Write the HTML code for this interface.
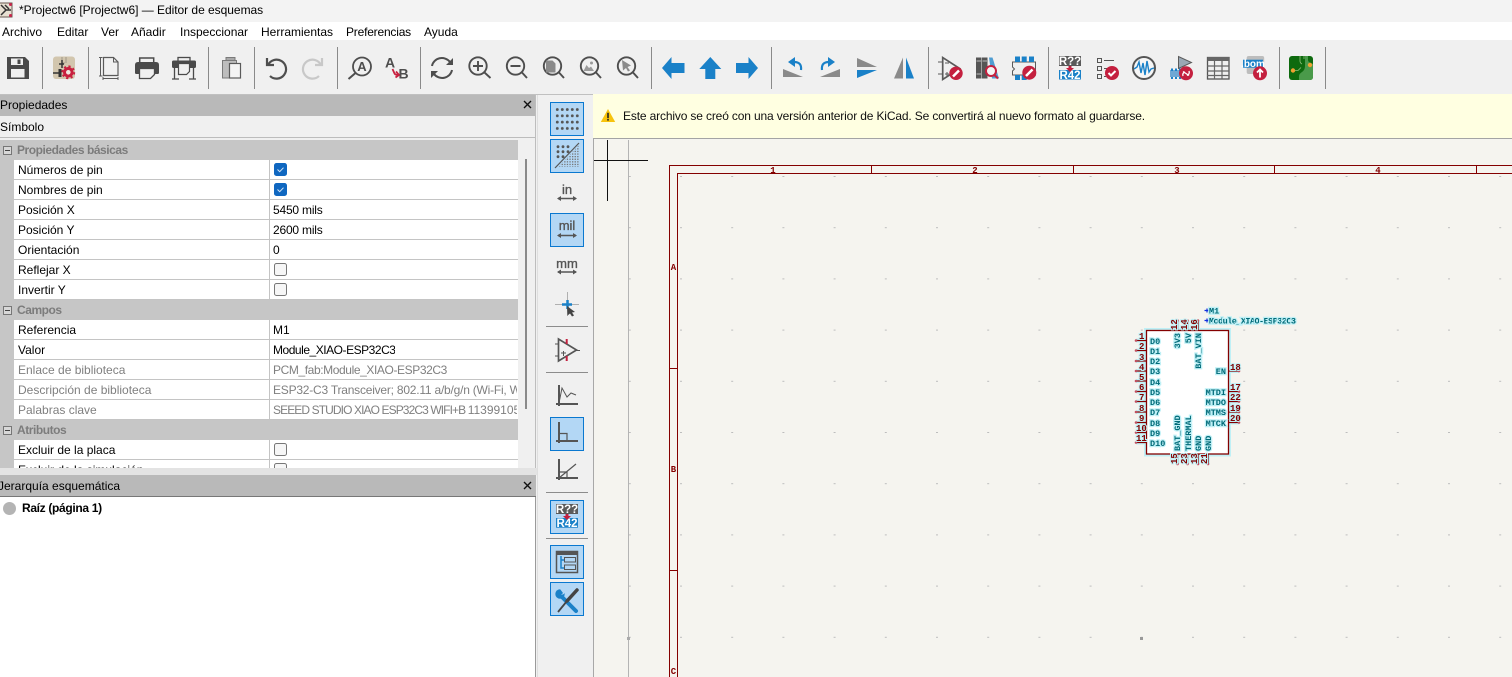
<!DOCTYPE html>
<html lang="es"><head><meta charset="utf-8"><title>Editor de esquemas</title>
<style>
html,body{margin:0;padding:0}
body{width:1512px;height:677px;overflow:hidden;position:relative;background:#f0f0f0;font:12px "Liberation Sans",sans-serif;color:#000}
.a{position:absolute}
.t{position:absolute;white-space:nowrap;line-height:20px;height:20px}
.m{top:22px;line-height:20px}
.row{position:absolute;left:14px;width:503.5px;height:19px;background:#fff;border-bottom:1px solid #c4c4c4}
.row span{position:absolute;top:1px;line-height:19px;white-space:nowrap}
.row .l{left:4px}.row .v{left:259px;max-width:244px;overflow:hidden;height:19px}
.row i{position:absolute;left:254.5px;top:0;width:1px;height:20px;background:#c4c4c4}
.row em{font-style:normal}
.g span{color:#7f7f7f}
.sec{position:absolute;left:0;width:517.5px;height:20px;background:#c6c6c6;font-weight:bold;color:#7c7c7c;line-height:20px;letter-spacing:-.45px}
.sec b{position:absolute;left:17px}
.sec u{position:absolute;left:3px;top:6px;width:7px;height:7px;border:1px solid #777;text-decoration:none;background:#d8d8d8}
.sec u:after{content:"";position:absolute;left:1px;top:3px;width:5px;height:1px;background:#444}
.cb{position:absolute;left:260px;top:3px;width:11px;height:11px;border:1px solid #777;border-radius:2.5px;background:#f6f6f6}
.on{background:#0f67c0;border-color:#0f67c0}
.on svg{position:absolute;left:1px;top:1px}
.tb{position:absolute;left:550px;width:32px;height:32px;background:#b3d7f5;border:1.5px solid #0a78d0}
</style></head><body>
<div class="a" style="left:0;top:0;width:1512px;height:22px;background:#f3f3f3"></div>
<div class="a" style="left:0;top:22px;width:1512px;height:18px;background:#fff"></div>
<div class="a" style="left:0;top:94px;width:593px;height:1px;background:#c0c0c0"></div>

<svg class="a" style="left:0;top:0" width="14" height="18" viewBox="0 0 14 18"><rect x="-3" y="3" width="15" height="14" fill="#e7e0d2" stroke="#6a5a50"/><path d="M1 5l5 5-5 5M6 10h5M5 5l4 4" fill="none" stroke="#333" stroke-width="1.5"/><circle cx="10.500" cy="4.500" r="1.500" fill="#c8264c"/><circle cx="10.500" cy="15.500" r="1.500" fill="#c8264c"/></svg>
<div class="t" style="left:19px;top:0;font-size:12px;letter-spacing:-.03px">*Projectw6 [Projectw6] — Editor de esquemas</div>
<div class="t m" style="left:2px">Archivo</div><div class="t m" style="left:57px">Editar</div><div class="t m" style="left:101px">Ver</div><div class="t m" style="left:131px">Añadir</div><div class="t m" style="left:180px">Inspeccionar</div><div class="t m" style="left:261px">Herramientas</div><div class="t m" style="left:346px;letter-spacing:-.2px">Preferencias</div><div class="t m" style="left:424px">Ayuda</div>

<!-- Properties panel -->
<div class="a" style="left:0;top:95px;width:536px;height:21px;background:#b9b9b9"></div>
<div class="t" style="left:0;top:95px;line-height:20px">Propiedades</div>
<div class="a" style="left:0;top:116px;width:536px;height:22px;background:#f0f0f0;border-bottom:1px solid #bcbcbc;box-sizing:border-box"></div>
<div class="t" style="left:0;top:117px">Símbolo</div>
<div class="a" style="left:0;top:139px;width:536px;height:330px;background:#f0f0f0"></div>
<div class="a" style="left:0;top:140px;width:14px;height:329px;background:#c6c6c6"></div>
<div class="a" style="left:525px;top:159px;width:2px;height:250px;background:#8a8a8a"></div>
<div class="a" style="left:535px;top:95px;width:1px;height:374px;background:#bdbdbd"></div>

<div class="sec" style="top:140px"><u></u><b>Propiedades básicas</b></div>
<div class="row" style="top:160px"><span class="l">Números de pin</span><i></i><div class="cb on"><svg width="9" height="9"><path d="M1.500 4.500l2.200 2.200 3.800-4" fill="none" stroke="#d8e8f8" stroke-width="1"/></svg></div></div>
<div class="row" style="top:180px"><span class="l">Nombres de pin</span><i></i><div class="cb on"><svg width="9" height="9"><path d="M1.500 4.500l2.200 2.200 3.800-4" fill="none" stroke="#d8e8f8" stroke-width="1"/></svg></div></div>
<div class="row" style="top:200px"><span class="l">Posición X</span><i></i><span class="v" style="letter-spacing:-.2px">5450 mils</span></div>
<div class="row" style="top:220px"><span class="l">Posición Y</span><i></i><span class="v" style="letter-spacing:-.2px">2600 mils</span></div>
<div class="row" style="top:240px"><span class="l">Orientación</span><i></i><span class="v">0</span></div>
<div class="row" style="top:260px"><span class="l">Reflejar X</span><i></i><div class="cb"></div></div>
<div class="row" style="top:280px"><span class="l">Invertir Y</span><i></i><div class="cb"></div></div>
<div class="sec" style="top:300px"><u></u><b>Campos</b></div>
<div class="row" style="top:320px"><span class="l">Referencia</span><i></i><span class="v">M1</span></div>
<div class="row" style="top:340px"><span class="l">Valor</span><i></i><span class="v" style="letter-spacing:-.47px">Module_XIAO-ESP32C3</span></div>
<div class="row g" style="top:360px"><span class="l">Enlace de biblioteca</span><i></i><span class="v" style="letter-spacing:-.4px">PCM_fab:Module_XIAO-ESP32C3</span></div>
<div class="row g" style="top:380px"><span class="l">Descripción de biblioteca</span><i></i><span class="v" style="letter-spacing:-.22px">ESP32-C3 Transceiver; 802.11 a/b/g/n (Wi-Fi, WiFi)</span></div>
<div class="row g" style="top:400px"><span class="l">Palabras clave</span><i></i><span class="v"><em style="letter-spacing:-.9px">SEEED STUDIO XIAO ESP32C3 WIFI+B </em>113991054</span></div>
<div class="sec" style="top:420px"><u></u><b>Atributos</b></div>
<div class="row" style="top:440px"><span class="l">Excluir de la placa</span><i></i><div class="cb"></div></div>
<div class="a" style="left:14px;top:460px;width:503.5px;height:8px;overflow:hidden;background:#fff"><div class="row" style="top:0;left:0"><span class="l">Excluir de la simulación</span><i></i><div class="cb"></div></div></div>
<div class="a" style="left:0;top:468px;width:537px;height:7px;background:#e3e3e3"></div>

<!-- Hierarchy -->
<div class="a" style="left:0;top:475px;width:536px;height:22px;background:#b9b9b9;border-bottom:1px solid #777;box-sizing:border-box"></div>
<div class="t" style="left:-2px;top:476px">Jerarquía esquemática</div>
<div class="a" style="left:0;top:497px;width:535px;height:180px;background:#fff;border-right:1px solid #9a9a9a"></div>
<div class="a" style="left:3px;top:502px;width:13px;height:13px;border-radius:50%;background:#b4b4b4"></div>
<div class="t" style="left:22px;top:498px;font-weight:bold;letter-spacing:-.33px">Raíz (página 1)</div>

<!-- Vertical toolbar -->
<div class="a" style="left:537px;top:95px;width:56px;height:582px;background:#f0f0f0;border-left:1px solid #dedede;box-sizing:border-box"></div>
<div class="tb" style="top:102px"></div><div class="tb" style="top:139px"></div><div class="tb" style="top:213px"></div><div class="tb" style="top:417px"></div><div class="tb" style="top:500px"></div><div class="tb" style="top:545px"></div><div class="tb" style="top:582px"></div>
<div class="a" style="left:546px;top:326px;width:42px;height:1px;background:#8c8c8c"></div>
<div class="a" style="left:546px;top:372px;width:42px;height:1px;background:#8c8c8c"></div>
<div class="a" style="left:546px;top:492px;width:42px;height:1px;background:#8c8c8c"></div>
<div class="a" style="left:546px;top:538px;width:42px;height:1px;background:#8c8c8c"></div>

<!-- Canvas -->
<svg class="a" style="left:593px;top:139px" width="919" height="538" viewBox="593 139 919 538" font-family="'Liberation Mono',monospace">
<defs><pattern id="g" x="628.800" y="124.800" width="51.200" height="51.200" patternUnits="userSpaceOnUse"><rect x="0" y="0" width="2" height="1" fill="#bdbdbd"/></pattern></defs>
<rect x="593" y="139" width="919" height="538" fill="#f5f4ef"/>
<rect x="628" y="140" width="884" height="537" fill="url(#g)"/>
<rect x="593" y="139" width="1" height="538" fill="#a8a8a8"/>
<rect x="628" y="140" width="1" height="537" fill="#b4b4b4"/>
<path d="M594 160.500H648M607.500 140V201" stroke="#111" fill="none"/>
<path d="M669.500 677V165.500H1512M677.500 677V173.500H1512M871.500 165V173M1073.500 165V173M1274.500 165V173M1476.500 165V173M669 368.500H677M669 570.500H677" fill="none" stroke="#840000" stroke-width="1"/>
<g fill="#840000" font-size="9" font-weight="bold" text-anchor="middle">
<text x="773" y="173">1</text><text x="975" y="173">2</text><text x="1177" y="173">3</text><text x="1378" y="173">4</text>
<text x="673.500" y="270">A</text><text x="673.500" y="472">B</text><text x="673.500" y="674">C</text></g>
<rect x="627" y="637" width="3" height="3" fill="#aaa"/><rect x="1140" y="637" width="3" height="3" fill="#999"/>

<!-- Symbol -->
<rect x="1146.500" y="330.500" width="82" height="123.500" fill="none" stroke="#bff0f6" stroke-width="5"/>
<path d="M1136 340.500h10M1136 350.500h10M1136 361h10M1136 371h10M1136 381h10M1136 391.500h10M1136 401.500h10M1136 412h10M1136 422.500h10M1136 432.500h10M1136 442.500h10M1229 371h10M1229 391.500h10M1229 401.500h10M1229 412h10M1229 422.500h10M1177.500 320.500v10M1187.500 320.500v10M1198 320.500v10M1177.500 454v10M1187.500 454v10M1198 454v10M1208 454v10" stroke="#bff0f6" stroke-width="4" fill="none"/>
<rect x="1147" y="331" width="81" height="123" fill="#fff"/>
<rect x="1146.500" y="330.500" width="82" height="123.500" fill="none" stroke="#840000" stroke-width="1.300"/>
<path d="M1136 340.500h10M1136 350.500h10M1136 361h10M1136 371h10M1136 381h10M1136 391.500h10M1136 401.500h10M1136 412h10M1136 422.500h10M1136 432.500h10M1136 442.500h10M1229 371h10M1229 391.500h10M1229 401.500h10M1229 412h10M1229 422.500h10M1177.500 320.500v10M1187.500 320.500v10M1198 320.500v10M1177.500 454v10M1187.500 454v10M1198 454v10M1208 454v10" stroke="#840000" stroke-width="1.200" fill="none"/>
<g fill="#c05060">
<circle cx="1136" cy="340.500" r="1.300"/><circle cx="1136" cy="350.500" r="1.300"/><circle cx="1136" cy="361" r="1.300"/><circle cx="1136" cy="371" r="1.300"/><circle cx="1136" cy="381" r="1.300"/><circle cx="1136" cy="391.500" r="1.300"/><circle cx="1136" cy="401.500" r="1.300"/><circle cx="1136" cy="412" r="1.300"/><circle cx="1136" cy="422.500" r="1.300"/><circle cx="1136" cy="432.500" r="1.300"/><circle cx="1136" cy="442.500" r="1.300"/>
<circle cx="1239" cy="371" r="1.300"/><circle cx="1239" cy="391.500" r="1.300"/><circle cx="1239" cy="401.500" r="1.300"/><circle cx="1239" cy="412" r="1.300"/><circle cx="1239" cy="422.500" r="1.300"/>
<circle cx="1177.500" cy="320.500" r="1.300"/><circle cx="1187.500" cy="320.500" r="1.300"/><circle cx="1198" cy="320.500" r="1.300"/>
<circle cx="1177.500" cy="464" r="1.300"/><circle cx="1187.500" cy="464" r="1.300"/><circle cx="1198" cy="464" r="1.300"/><circle cx="1208" cy="464" r="1.300"/>
</g>
<path d="M1204.500 310.500h5M1204.500 320.500h5M1207 308.500v4M1207 318.500v4" stroke="#1030e0" stroke-width="1.200"/>
<g fill="#006a78" font-size="8.500" font-weight="bold" stroke="#bff0f6" stroke-width="2.500" paint-order="stroke">
<text x="1209" y="313.500">M1</text><text x="1209" y="323.500" textLength="87">Module_XIAO-ESP32C3</text>
<text x="1150" y="344">D0</text><text x="1150" y="354">D1</text><text x="1150" y="364">D2</text><text x="1150" y="374">D3</text><text x="1150" y="385">D4</text><text x="1150" y="395">D5</text><text x="1150" y="405">D6</text><text x="1150" y="415">D7</text><text x="1150" y="426">D8</text><text x="1150" y="436">D9</text><text x="1150" y="446">D10</text>
<g text-anchor="end"><text x="1226" y="374">EN</text><text x="1226" y="395">MTDI</text><text x="1226" y="405">MTDO</text><text x="1226" y="415">MTMS</text><text x="1226" y="426">MTCK</text></g>
<g text-anchor="end"><text transform="translate(1180 333) rotate(-90)">3V3</text><text transform="translate(1191 333) rotate(-90)">5V</text><text transform="translate(1201 333) rotate(-90)">BAT_VIN</text></g>
<text transform="translate(1180 451) rotate(-90)">BAT_GND</text><text transform="translate(1191 451) rotate(-90)">THERMAL</text><text transform="translate(1201 451) rotate(-90)">GND</text><text transform="translate(1211 451) rotate(-90)">GND</text>
</g>
<g fill="#840000" font-size="9" font-weight="bold" stroke="#bff0f6" stroke-width="2" paint-order="stroke">
<text x="1139" y="339">1</text><text x="1139" y="349">2</text><text x="1139" y="360">3</text><text x="1139" y="370">4</text><text x="1139" y="380">5</text><text x="1139" y="390">6</text><text x="1139" y="400">7</text><text x="1139" y="411">8</text><text x="1139" y="421">9</text><text x="1136" y="431">10</text><text x="1136" y="441">11</text>
<text x="1230" y="370">18</text><text x="1230" y="390">17</text><text x="1230" y="400">22</text><text x="1230" y="411">19</text><text x="1230" y="421">20</text>
<text transform="translate(1177 330) rotate(-90)">12</text><text transform="translate(1187 330) rotate(-90)">14</text><text transform="translate(1197 330) rotate(-90)">16</text>
<text transform="translate(1177 464) rotate(-90)">15</text><text transform="translate(1187 464) rotate(-90)">23</text><text transform="translate(1197 464) rotate(-90)">13</text><text transform="translate(1207 464) rotate(-90)">21</text>
</g>
</svg>

<!-- Message bar -->
<div class="a" style="left:593px;top:94px;width:919px;height:45px;background:#ffffe1;border-bottom:1px solid #a4a4a4;box-sizing:border-box"></div>
<div class="t" style="left:623px;top:106px;font-size:12px;color:#101010;letter-spacing:-.15px">Este archivo se creó con una versión anterior de KiCad. Se convertirá al nuevo formato al guardarse.</div>

<!-- Icons overlay -->
<svg class="a" style="left:0;top:0;pointer-events:none" width="1512" height="677" viewBox="0 0 1512 677" font-family="'Liberation Sans',sans-serif">
<g fill="#8a8a8a"><rect x="42" y="47" width="1" height="42"/><rect x="88" y="47" width="1" height="42"/><rect x="208" y="47" width="1" height="42"/><rect x="254" y="47" width="1" height="42"/><rect x="337" y="47" width="1" height="42"/><rect x="420" y="47" width="1" height="42"/><rect x="651" y="47" width="1" height="42"/><rect x="771" y="47" width="1" height="42"/><rect x="928" y="47" width="1" height="42"/><rect x="1048" y="47" width="1" height="42"/><rect x="1279" y="47" width="1" height="42"/><rect x="1325" y="47" width="1" height="42"/></g>

<!-- save -->
<path d="M7 57h18l4 4v18H7z" fill="#4a4a4a"/><rect x="11" y="58.500" width="12" height="6.500" fill="#f0f0f0"/><rect x="17.500" y="59.500" width="3" height="4.500" fill="#4a4a4a"/><rect x="11" y="69" width="13.500" height="8.500" fill="#f0f0f0"/>
<!-- schematic setup -->
<rect x="53" y="56.500" width="22" height="22.500" rx="3" fill="#d2c6ae"/><path d="M62 57v6M62 63l3 0M53 73h8M66 57v6" stroke="#a09888" stroke-width="1" fill="none"/><path d="M62 60v8M53 73h6M59 64h5" stroke="#333" stroke-width="1.500" fill="none"/><rect x="58.500" y="69" width="3" height="8" fill="#333"/><circle cx="68.300" cy="72.300" r="3.800" fill="#f0e8e0" stroke="#c8203f" stroke-width="3"/><circle cx="68.300" cy="72.300" r="6" fill="none" stroke="#c8203f" stroke-width="1.800" stroke-dasharray="2.200 2.500"/>
<!-- page -->
<path d="M103.500 57.500h10l4.500 4.500v13.500h-14.500z" fill="none" stroke="#5a5a5a" stroke-width="1.200"/><path d="M113.500 57.500v4.500h4.500" fill="none" stroke="#5a5a5a"/><path d="M100.500 57v19M99 57.500h3.500M99 76h3.500M103 78.500h15M103 77v3M118 77v3" stroke="#5a5a5a" fill="none"/>
<!-- print -->
<rect x="139.700" y="58" width="14" height="6" fill="none" stroke="#4a4a4a" stroke-width="1.500"/><path d="M135 65q0-3 3-3h18q3 0 3 3v8q0 1-2 1h-20q-2 0-2-1z" fill="#4a4a4a"/><path d="M139.500 68.500h15v6l-4 4h-11z" fill="#f0f0f0" stroke="#4a4a4a" stroke-width="1.300"/>
<!-- plot -->
<rect x="178" y="57.500" width="12" height="4" fill="none" stroke="#4a4a4a" stroke-width="1.300"/><rect x="172" y="60.500" width="24" height="7.500" rx="1.500" fill="#4a4a4a"/><path d="M178.500 63.500h11v8l-3 3h-8z" fill="#f0f0f0" stroke="#4a4a4a" stroke-width="1.200"/><path d="M174.500 67v12M193.500 67v12M172 79h7M189 79h7" stroke="#4a4a4a" stroke-width="1.300" fill="none"/>
<!-- paste -->
<rect x="226" y="57.500" width="9" height="4" fill="#a8a8a8" stroke="#7a7a7a"/><rect x="222.500" y="60.500" width="14" height="17.500" fill="#bdbdbd" stroke="#7a7a7a"/><rect x="229.500" y="63.500" width="11" height="14.500" fill="#f4f4f4" stroke="#5a5a5a" stroke-width="1.200"/>
<!-- undo/redo -->
<path d="M267 58v7h7M268 65a9.500 9.500 0 1 1 2 11" fill="none" stroke="#4e4e4e" stroke-width="2.200"/>
<path d="M322 58v7h-7M321 65a9.500 9.500 0 1 0-2 11" fill="none" stroke="#c8c8c8" stroke-width="2.200"/>
<!-- find -->
<circle cx="362" cy="66.500" r="9" fill="none" stroke="#4e4e4e" stroke-width="1.800"/><path d="M355.500 73l-7 6" stroke="#4e4e4e" stroke-width="2"/><text x="362" y="71" font-size="13" font-weight="bold" fill="#4e4e4e" text-anchor="middle">A</text>
<!-- replace -->
<text x="390" y="67.500" font-size="14" font-weight="bold" fill="#4e4e4e" text-anchor="middle">A</text><text x="403.500" y="78.500" font-size="14" font-weight="bold" fill="#4e4e4e" text-anchor="middle">B</text><path d="M392.500 69l2 4.500q1 1.500 3 1.500h1M396 71.500l3 3.500-3.500 2.500" stroke="#c8203f" stroke-width="1.800" fill="none"/>
<!-- refresh -->
<path d="M432 66a10 9.500 0 0 1 18-4M452 70a10 9.500 0 0 1-18 4" fill="none" stroke="#4e4e4e" stroke-width="2"/><path d="M453 58v7h-7zM431 78v-7h7z" fill="#4e4e4e"/>
<!-- zooms -->
<g fill="none" stroke="#4e4e4e" stroke-width="1.900">
<circle cx="478" cy="66" r="8.700"/><path d="M484.500 72.500l6 5.500M473 66h10M478 61v10"/>
<circle cx="515.500" cy="66" r="8.700"/><path d="M522 72.500l5 5.500M510.500 66h10"/>
<circle cx="552.500" cy="66" r="8.700"/><path d="M559 72.500l5 5.500"/>
<circle cx="589.500" cy="66" r="8.700"/><path d="M596 72.500l5 5.500"/>
<circle cx="626.500" cy="66" r="8.700"/><path d="M633 72.500l5 5.500"/></g>
<path d="M546 60.500h6.500l3 3v9H546z" fill="#8a8a8a"/><path d="M583.500 71l3-6 2.500 3 2-1.500 3 4.500z" fill="#9a9a9a"/><circle cx="591.500" cy="63" r="1.500" fill="#9a9a9a"/><path d="M622 60l9 5.500-3.500 1.500 2.500 3.500-2 1-2-3.500-3 2.500z" fill="#8a8a8a"/>
<!-- arrows -->
<g fill="#1a81c8"><path d="M662 68l9.500-11v6h13v10h-13v6z"/><path d="M710.300 57l11 12h-6v10h-10V69h-6z"/><path d="M758 68l-9.500-11v6H736v10h12.500v6z"/></g>
<!-- rotate / mirror -->
<path d="M783 77v-8l20 8z" fill="#8a8a8a"/><path d="M801 70q1-8-7-8" fill="none" stroke="#1a81c8" stroke-width="2.200"/><path d="M795 57l-7 5 7 5z" fill="#1a81c8"/>
<path d="M840 77v-8l-20 8z" fill="#8a8a8a"/><path d="M822 70q-1-8 7-8" fill="none" stroke="#1a81c8" stroke-width="2.200"/><path d="M828 57l7 5-7 5z" fill="#1a81c8"/>
<path d="M857 58l20 9h-20z" fill="#8a8a8a"/><path d="M857 78l20-8h-20z" fill="#1a81c8"/>
<path d="M903 57.500v21h-9z" fill="#8a8a8a"/><path d="M906 57.500v21h8z" fill="#1a81c8"/>
<!-- sym edit -->
<path d="M942.700 57.500v22l17-11z" fill="none" stroke="#5a5a5a" stroke-width="1.700"/><path d="M938 62h5M938 74h5M945 63h4M945 74h4M947 72v4" stroke="#5a5a5a" fill="none"/><circle cx="956" cy="73.300" r="6.700" fill="#c4203f"/><path d="M953 76.500l6-6" stroke="#fff" stroke-width="2.500"/>
<!-- lib -->
<rect x="976" y="57.500" width="5.500" height="21" fill="#555"/><rect x="982" y="57.500" width="5.500" height="21" fill="#555"/><path d="M976.500 61h4.500M982.500 61h4.500M976.500 74h4.500" stroke="#bbb" fill="none"/><path d="M989 57.500l3.500 0 6.500 21h-7z" fill="#1a81c8" opacity=".75"/><circle cx="991" cy="71" r="5" fill="#f4f4f4" stroke="#c4203f" stroke-width="2"/><path d="M994.500 75l3.500 3.500" stroke="#c4203f" stroke-width="2.200"/>
<!-- fp edit -->
<path d="M1012.500 62h23v13h-23v-4l2-2-2-2z" fill="none" stroke="#5a5a5a"/><g fill="#1a81c8"><rect x="1015" y="56.500" width="5" height="5.500"/><rect x="1021.700" y="56.500" width="5" height="5.500"/><rect x="1029" y="56.500" width="5" height="5.500"/><rect x="1015" y="75" width="5" height="5"/><rect x="1021.700" y="75" width="5" height="5"/></g><circle cx="1029.300" cy="72.700" r="7" fill="#c4203f"/><path d="M1026 76l6.500-6.500" stroke="#fff" stroke-width="2.500"/>
<!-- annotate -->
<rect x="1059" y="56" width="22" height="10" fill="#5a5a5a"/><text x="1070" y="65" font-size="11.500" font-weight="bold" fill="#fff" text-anchor="middle">R??</text><rect x="1059" y="70" width="22" height="9.500" fill="#1a81c8"/><text x="1070" y="79" font-size="11.500" font-weight="bold" fill="#fff" text-anchor="middle">R42</text><path d="M1068.500 66h3v2h2.500l-4 4-4-4h2.500z" fill="#c4203f"/>
<!-- erc -->
<g fill="none" stroke="#555"><rect x="1097.500" y="58.500" width="4" height="4"/><rect x="1097.500" y="66.500" width="4" height="4"/><rect x="1097.500" y="74.500" width="4" height="4"/><path d="M1104 60.500h10M1104 68.500h4M1104 76.500h2"/></g><circle cx="1112" cy="73" r="7" fill="#c4203f"/><path d="M1108.500 73l2.500 2.500 4.500-4.500" stroke="#fff" stroke-width="2" fill="none"/>
<!-- sim -->
<circle cx="1144" cy="68" r="11" fill="#f6f6f6" stroke="#555" stroke-width="2"/><polyline points="1134,69 1137,67 1139,62 1141,73 1143,63 1145,75 1147,61 1149,72 1151,69 1154,68" fill="none" stroke="#1a81c8" stroke-width="1.400"/>
<!-- netlist -->
<path d="M1178.500 56.500v12l13-6z" fill="#9aa8b4" stroke="#5a5a5a"/><rect x="1170" y="70" width="12" height="7" fill="#6fa8d4"/><path d="M1172 68.500v10.500M1176 68.500v10.500M1180 68.500v10.500" stroke="#1a81c8" stroke-width="2" stroke-dasharray="2.500 6"/><circle cx="1186" cy="73.300" r="7" fill="#c4203f"/><path d="M1183 76q-1-3 2-4M1189 71q1 3-2 4.500M1183 71.500l6 4" stroke="#fff" stroke-width="1.300" fill="none"/>
<!-- table -->
<rect x="1207.500" y="57.500" width="21.500" height="21.500" fill="#f0f0f0" stroke="#555" stroke-width="1.300"/><rect x="1207.500" y="57" width="21.500" height="4" fill="#666"/><path d="M1214.500 61v18M1222 61v18M1207 66h22M1207 71h22M1207 75.500h22" stroke="#666" stroke-width="1.200" fill="none"/>
<!-- bom -->
<rect x="1246.700" y="56" width="17.500" height="18" rx="2" fill="#bdbdbd"/><rect x="1243" y="59.700" width="20" height="8" fill="#1a81c8"/><text x="1253" y="67" font-size="10" font-weight="bold" fill="#fff" text-anchor="middle">.bom</text><circle cx="1260" cy="73.300" r="7" fill="#c4203f"/><path d="M1260 77.500v-7.500M1257 72.500l3-3 3 3" stroke="#fff" stroke-width="1.800" fill="none"/>
<!-- pcb -->
<rect x="1289" y="56" width="24" height="24" rx="3" fill="#0e6a0e"/><path d="M1299 80v-4q0-2 3-4q3-2 3-6V56h3v4q0 2 3 3l2 1v13q0 3-3 3z" fill="#4a9a4a"/><path d="M1300 56v5q0 2 2 3M1304 56v3M1293 70.500h5l3-3" stroke="#8fc07a" stroke-width=".8" fill="none"/><circle cx="1293" cy="70.500" r="2.200" fill="#f0a030"/><circle cx="1310" cy="65" r="2.200" fill="#f0a030"/>

<!-- warning -->
<path d="M608 109l7.200 13h-14.400z" fill="#f7c30d"/><rect x="607.200" y="112.800" width="1.600" height="5.400" fill="#222"/><rect x="607.200" y="119" width="1.600" height="1.600" fill="#222"/>

<!-- close icons -->
<path d="M524 101l7 7M531 101l-7 7M524 482l7 7M531 482l-7 7" stroke="#111" stroke-width="1.400"/>

<!-- left toolbar icons -->
<defs><pattern id="d1" width="5" height="6.300" patternUnits="userSpaceOnUse" x="555" y="107"><circle cx="2.300" cy="2.500" r="1.400" fill="#555"/></pattern><pattern id="d2" width="2.600" height="2.600" patternUnits="userSpaceOnUse"><rect width="1.300" height="1.300" fill="#777"/></pattern></defs>
<rect x="555" y="107" width="25" height="25" fill="url(#d1)"/>
<path d="M558 167l21-22v22z" fill="url(#d2)"/><g fill="#555"><circle cx="558" cy="146.700" r="1.400"/><circle cx="563" cy="146.700" r="1.400"/><circle cx="568" cy="146.700" r="1.400"/><circle cx="558" cy="151.700" r="1.400"/><circle cx="563" cy="151.700" r="1.400"/><circle cx="568" cy="151.700" r="1.400"/><circle cx="558" cy="156.700" r="1.400"/><circle cx="563" cy="156.700" r="1.400"/></g><path d="M555 168l24-25" stroke="#555" stroke-width="1.200"/>
<g fill="#555" stroke="#555" stroke-width=".35" text-anchor="middle" style="font-size:13px"><text x="567" y="194">in</text><text x="567" y="230">mil</text><text x="567" y="268">mm</text></g>
<path d="M558 198.500h18M558 235.500h18M558 272h18" stroke="#555" stroke-width="1.500"/><path d="M557 198.500l4-2.500v5zM577 198.500l-4-2.500v5zM557 235.500l4-2.500v5zM577 235.500l-4-2.500v5zM557 272l4-2.500v5zM577 272l-4-2.500v5z" fill="#555"/>
<path d="M555 304.500h24M567.500 292v24" stroke="#b0b0b0"/><path d="M562 304.500h10M567.500 300v9" stroke="#1a81c8" stroke-width="2.500"/><path d="M567 306l8 6-3 .5 2 3-2 1-2-3-2.500 2z" fill="#444"/>
<path d="M558.500 339v22l18-11z" fill="none" stroke="#555" stroke-width="1.700"/><path d="M555 344h4M555 356h4M561 353h5M563.500 351v5M576 350.500h4" stroke="#555" fill="none"/><path d="M566.700 339v5M566.700 356v5" stroke="#c4203f" stroke-width="2"/>
<g fill="none" stroke="#555" stroke-width="2"><path d="M559 385v21M556 404h22"/><path d="M559 403l3-15 5 9 4-4 5 2" stroke-width="1"/><path d="M559 422v21M556 441h22"/><path d="M559 433.500h8v8" stroke-width="1.200"/><path d="M559 459v21M556 478h22"/><path d="M559 472h8v6M559 478l17-14" stroke-width="1.200"/></g>
<rect x="556" y="504" width="22" height="10" fill="#5a5a5a"/><text x="567" y="513" font-size="11.500" font-weight="bold" fill="#fff" text-anchor="middle">R??</text><rect x="556" y="518" width="22" height="9.700" fill="#1a81c8"/><text x="567" y="527" font-size="11.500" font-weight="bold" fill="#fff" text-anchor="middle">R42</text><path d="M565.500 514h3v2h2.500l-4 4-4-4h2.500z" fill="#c4203f"/>
<rect x="556.500" y="551.500" width="21" height="21" fill="none" stroke="#555" stroke-width="1.500"/><rect x="556.500" y="551.500" width="21" height="3.500" fill="#555"/><path d="M561 556v12h3M561 560h3" stroke="#1a81c8" stroke-width="1.500" fill="none"/><rect x="564.500" y="557.500" width="11" height="4.500" fill="none" stroke="#555"/><rect x="564.500" y="565" width="11" height="4.500" fill="none" stroke="#555"/>
<path d="M561 596l15 15" stroke="#1a81c8" stroke-width="4" stroke-linecap="round"/><circle cx="560" cy="594" r="4.700" fill="#1a81c8"/><path d="M560 589l3 4-2 2 3-1 2-5z" fill="#b3d7f5"/><path d="M577 590l-10 11" stroke="#444" stroke-width="3.500" stroke-linecap="round"/><path d="M567 601l-9 11" stroke="#444" stroke-width="1.800"/>
</svg>
</body></html>
